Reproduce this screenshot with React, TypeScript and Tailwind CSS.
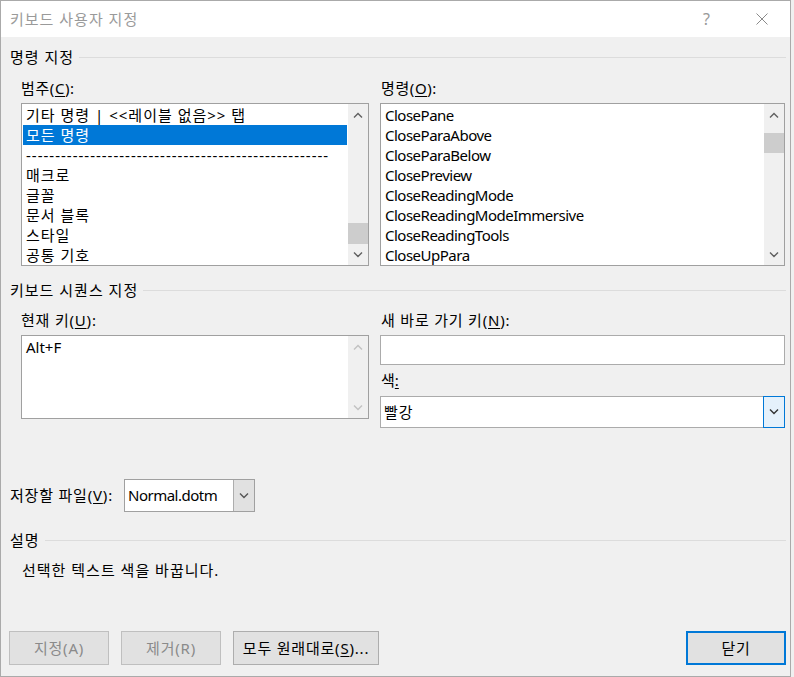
import React from 'react';

// Keyboard customization dialog (Word, Korean UI)

const FONT = "font-['Noto_Sans','Noto_Sans_CJK_KR',sans-serif]";

const Chevron = ({ dir, color = '#606060' }: { dir: 'up' | 'down'; color?: string }) => (
  <svg width="10" height="6" viewBox="0 0 10 6" fill="none">
    <path
      d={dir === 'up' ? 'M1 5.5 L5 1.5 L9 5.5' : 'M1 0.5 L5 4.5 L9 0.5'}
      stroke={color}
      strokeWidth="1.4"
    />
  </svg>
);

const Mn = ({ children }: { children: React.ReactNode }) => <span className="underline underline-offset-2">{children}</span>;

const SectionHeader = ({ title, className = '' }: { title: string; className?: string }) => (
  <div className={`flex items-center h-[20px] ${className}`}>
    <span className="text-[15px] leading-[20px] text-black whitespace-nowrap tracking-[1px]">{title}</span>
    <div className="flex-1 h-px bg-[#dcdcdc] ml-[5px]" />
  </div>
);

interface ScrollBarProps {
  thumb?: 'low' | 'high';
  disabled?: boolean;
}

const ScrollBar = ({ thumb, disabled }: ScrollBarProps) => (
  <div className="w-[20px] bg-[#f0f0f0] flex flex-col">
    <div className="h-[17px] flex items-center justify-center pt-[4px]">
      <Chevron dir="up" color={disabled ? '#c2c2c2' : '#606060'} />
    </div>
    <div className="flex-1">
      {thumb === 'low' && <div className="bg-[#cdcdcd] mt-[102px] h-[21px]" />}
      {thumb === 'high' && <div className="bg-[#cdcdcd] mt-[12px] h-[20px]" />}
    </div>
    <div className="h-[17px] flex items-center justify-center pb-[3px]">
      <Chevron dir="down" color={disabled ? '#c2c2c2' : '#606060'} />
    </div>
  </div>
);

const categories = [
  '기타 명령 | <<레이블 없음>> 탭',
  '모든 명령',
  '----------------------------------------------------',
  '매크로',
  '글꼴',
  '문서 블록',
  '스타일',
  '공통 기호',
];

const commands = [
  'ClosePane',
  'CloseParaAbove',
  'CloseParaBelow',
  'ClosePreview',
  'CloseReadingMode',
  'CloseReadingModeImmersive',
  'CloseReadingTools',
  'CloseUpPara',
];

interface ListBoxProps {
  items: string[];
  selected?: number;
  width: string;
  thumb: 'low' | 'high';
  tracking: string;
}

const ListBox = ({ items, selected, width, thumb, tracking }: ListBoxProps) => (
  <div className={`${width} h-[163px] border border-[#a0a0a0] bg-white flex`}>
    <div className={`flex-1 p-[1px] overflow-hidden ${tracking}`}>
      {items.map((item, i) => (
        <div
          key={i}
          className={`h-[20px] leading-[20px] text-[15px] pl-[3px] whitespace-nowrap overflow-hidden ${
            selected === i ? 'bg-[#0078d7] text-white' : 'text-black'
          }`}
        >
          {item}
        </div>
      ))}
    </div>
    <ScrollBar thumb={thumb} />
  </div>
);

const DlgButton = ({ children, width, disabled, primary }: { children: React.ReactNode; width: string; disabled?: boolean; primary?: boolean }) => (
  <button
    className={`${width} h-[34px] bg-[#e1e1e1] text-[15px] tracking-[0.8px] flex items-center justify-center ${
      primary
        ? 'border-2 border-[#0078d7] text-black'
        : disabled
        ? 'border border-[#bfbfbf] text-[#8a8a8a]'
        : 'border border-[#adadad] text-black'
    }`}
  >
    {children}
  </button>
);

export default function App() {
  return (
    <div className={`w-[794px] h-[677px] bg-[#f0f0f0] ${FONT}`}>
      <div className="w-[791px] h-[677px] border border-[#aaaaaa] flex flex-col bg-[#f0f0f0]">
        {/* Title bar */}
        <div className="h-[36px] bg-white flex items-center pl-[9px] shrink-0">
          <span className="text-[15px] tracking-[1px] text-[#9a9a9a] flex-1">키보드 사용자 지정</span>
          <span className="text-[16px] text-[#999999] mr-[46px]">?</span>
          <svg width="12" height="12" viewBox="0 0 12 12" className="mr-[22px]">
            <path d="M0.5 0.5 L11.5 11.5 M11.5 0.5 L0.5 11.5" stroke="#8a8a8a" strokeWidth="1" />
          </svg>
        </div>

        {/* Body */}
        <div className="flex-1 flex flex-col pl-[9px] pr-[4px] text-black">
          <SectionHeader title="명령 지정" className="mt-[10px]" />

          <div className="flex mt-[11px] ml-[11px] gap-[11px]">
            <div className="flex flex-col w-[348px]">
              <div className="h-[20px] leading-[20px] text-[15px] tracking-[0.6px]">
                범주(<Mn>C</Mn>):
              </div>
              <div className="mt-[5px]">
                <ListBox items={categories} selected={1} width="w-[348px]" thumb="low" tracking="tracking-[1px]" />
              </div>
            </div>
            <div className="flex flex-col w-[405px]">
              <div className="h-[20px] leading-[20px] text-[15px] pl-[1px] tracking-[0.6px]">
                명령(<Mn>O</Mn>):
              </div>
              <div className="mt-[5px]">
                <ListBox items={commands} width="w-[405px]" thumb="high" tracking="tracking-[-0.5px]" />
              </div>
            </div>
          </div>

          <SectionHeader title="키보드 시퀀스 지정" className="mt-[14px]" />

          <div className="flex mt-[10px] ml-[11px] gap-[11px]">
            <div className="flex flex-col w-[348px]">
              <div className="h-[20px] leading-[20px] text-[15px] tracking-[0.8px]">
                현재 키(<Mn>U</Mn>):
              </div>
              <div className="mt-[5px] w-[348px] h-[84px] border border-[#a0a0a0] bg-white flex">
                <div className="flex-1 p-[1px]">
                  <div className="h-[20px] leading-[20px] text-[15px] pl-[3px]">Alt+F</div>
                </div>
                <ScrollBar disabled />
              </div>
            </div>
            <div className="flex flex-col w-[405px]">
              <div className="h-[20px] leading-[20px] text-[15px] pl-[1px] tracking-[0.8px]">
                새 바로 가기 키(<Mn>N</Mn>):
              </div>
              <div className="mt-[5px] h-[30px] border border-[#ababab] bg-white" />
              <div className="mt-[5px] h-[20px] leading-[20px] text-[15px] pl-[1px]">
                색<Mn>:</Mn>
              </div>
              <div className="mt-[6px] h-[32px] border border-[#ababab] bg-white flex">
                <div className="flex-1 flex items-center pl-[3px] text-[15px] tracking-[1px]">빨강</div>
                <div className="w-[22px] -my-px -mr-px border border-[#0078d7] bg-[#e5f1fb] flex items-center justify-center">
                  <Chevron dir="down" color="#333333" />
                </div>
              </div>
            </div>
          </div>

          {/* Save in */}
          <div className="flex items-center mt-[51px]">
            <span className="text-[15px] w-[114px] tracking-[0.8px] whitespace-nowrap">
              저장할 파일(<Mn>V</Mn>):
            </span>
            <div className="w-[131px] h-[33px] border border-[#a0a0a0] bg-white flex">
              <div className="flex-1 flex items-center pl-[3px] text-[15px] tracking-[-0.5px]">Normal.dotm</div>
              <div className="w-[21px] bg-[#e1e1e1] border-l border-[#adadad] flex items-center justify-center">
                <Chevron dir="down" color="#555555" />
              </div>
            </div>
          </div>

          <SectionHeader title="설명" className="mt-[18px]" />
          <div className="mt-[10px] ml-[12px] h-[20px] leading-[20px] text-[15px] tracking-[1px]">선택한 텍스트 색을 바꿉니다.</div>

          {/* Buttons */}
          <div className="flex mt-[51px] -ml-[1px] gap-[12px]">
            <DlgButton width="w-[100px]" disabled>
              지정(A)
            </DlgButton>
            <DlgButton width="w-[100px]" disabled>
              제거(R)
            </DlgButton>
            <DlgButton width="w-[146px]">
              모두 원래대로(<Mn>S</Mn>)...
            </DlgButton>
            <div className="flex-1" />
            <DlgButton width="w-[100px]" primary>
              닫기
            </DlgButton>
          </div>
        </div>
      </div>
    </div>
  );
}
